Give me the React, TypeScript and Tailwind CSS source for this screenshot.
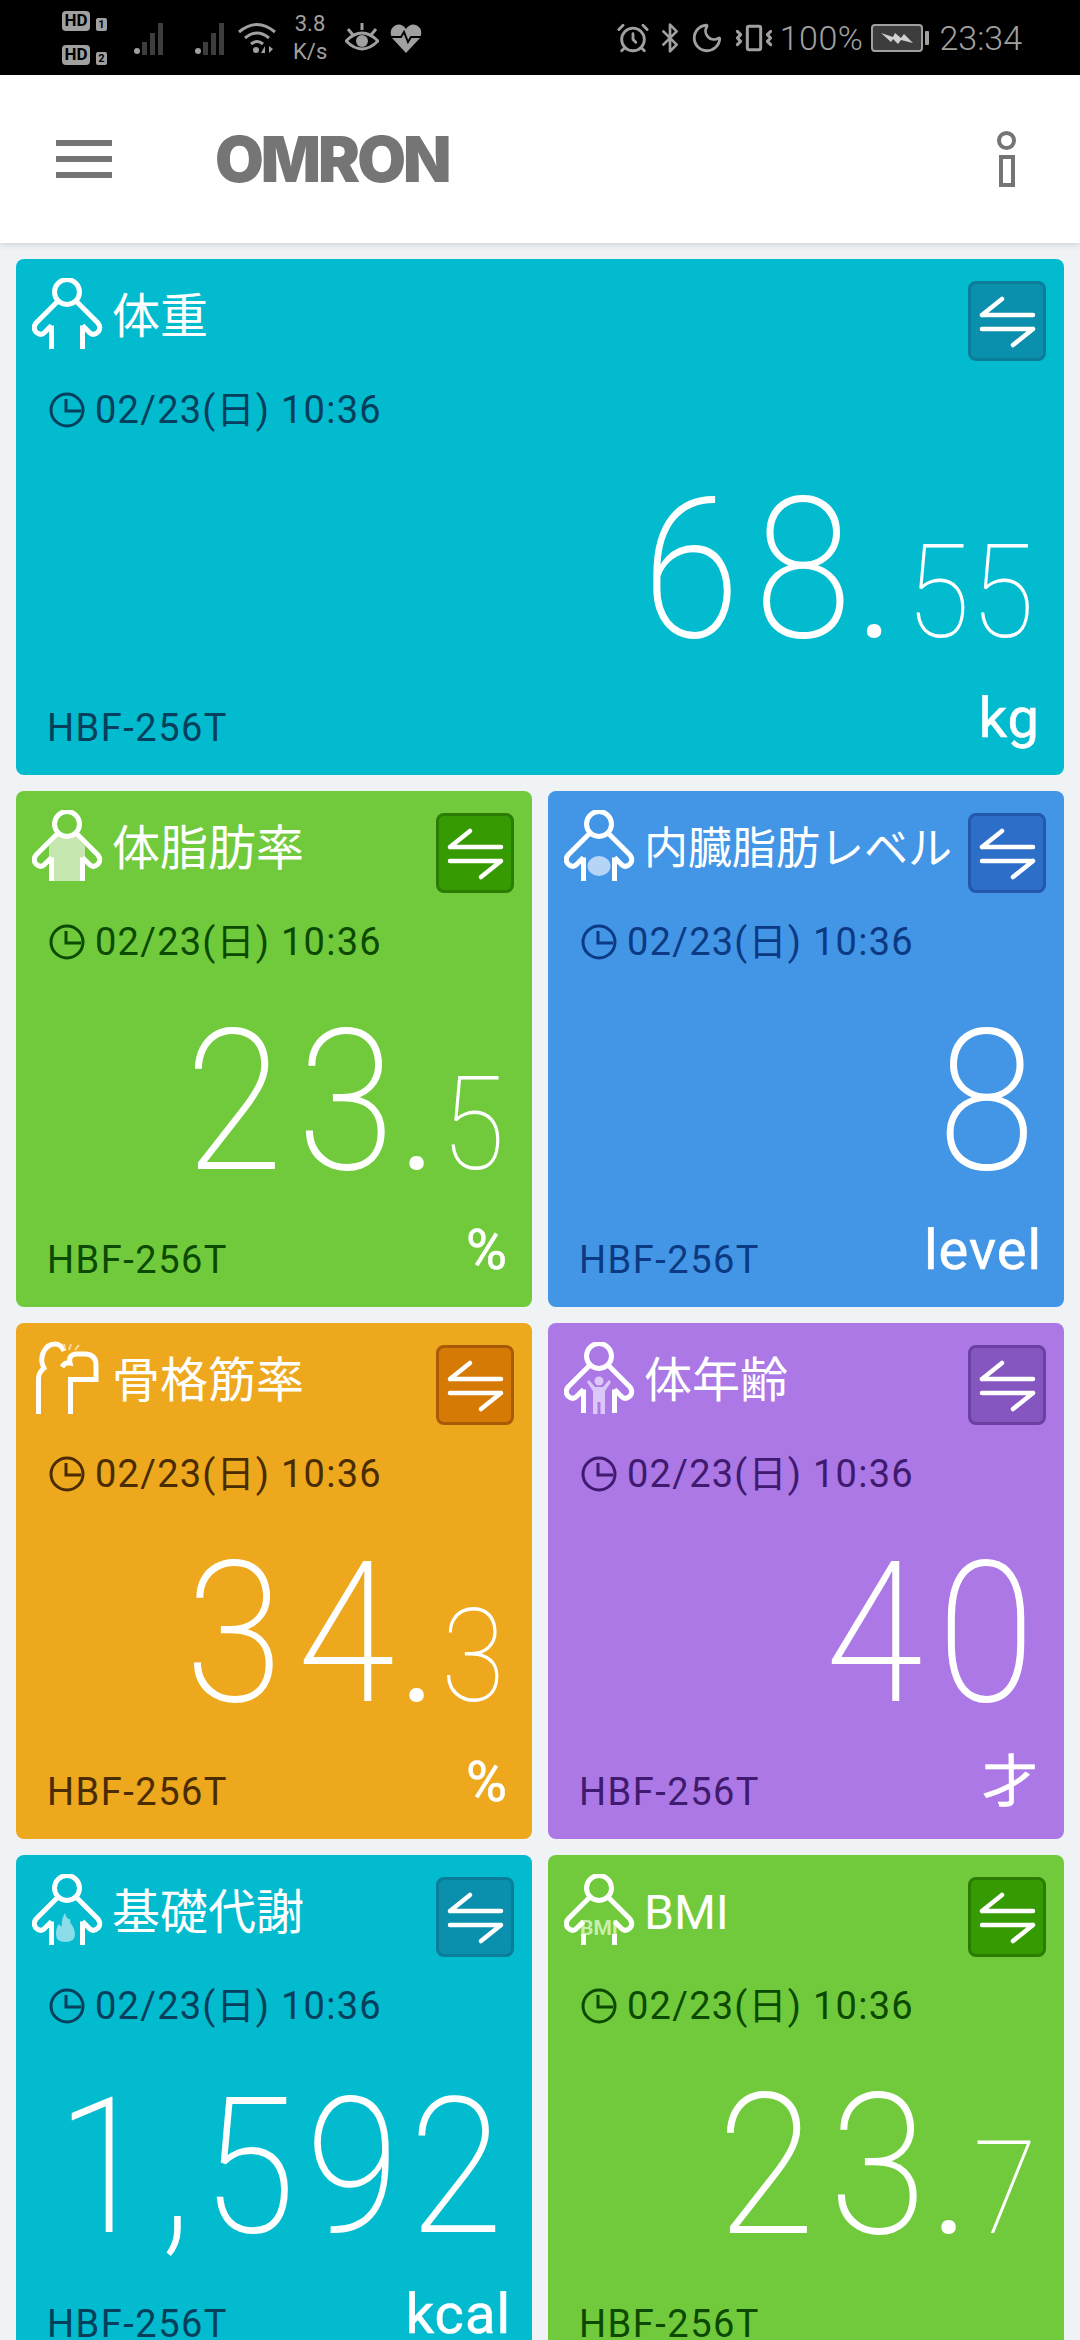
import type { ReactNode } from "react";
import { AlarmClock, Bluetooth, Moon, Vibrate } from "lucide-react";

const cjk = "font-['Roboto','Noto_Sans_CJK_JP',sans-serif]";

function Outline({ kind }: { kind: string }) {
  const legs = kind === "bmi" ? "M19.5 60 V71 M50.5 60 V71" : "M19.5 47.5 V71 M50.5 47.5 V71";
  return (
    <g fill="none" stroke="#fff" strokeWidth="5" strokeLinejoin="round">
      <circle cx="35" cy="14" r="12.5" />
      <path d="M26 23 L4 45 Q0.5 50 4 54 Q8 58 12 55 L19.5 47.5" />
      <path d="M44 23 L66 45 Q69.5 50 66 54 Q62 58 58 55 L50.5 47.5" />
      <path d={legs} />
    </g>
  );
}

function BodyIcon({ kind }: { kind: string }) {
  return (
    <svg width="72" height="72" viewBox="0 0 72 72" className="shrink-0">
      {kind === "fat" && <path d="M27 25 Q35 29 43 25 L53 36 V71 H17 V36 Z" fill="#c6e8b0" />}
      {kind === "visceral" && <ellipse cx="35" cy="56" rx="11.5" ry="10" fill="#b6d5f6" />}
      {kind === "age" && (
        <g fill="#dcc8f8">
          <circle cx="35" cy="39" r="4.5" />
          <path d="M23 40 L25 38 L31 45 H39 L45 38 L47 40 L41 49 V72 H36.5 V60 H33.5 V72 H29 V49 Z" />
        </g>
      )}
      {kind === "burn" && (
        <path d="M33 39 Q35 46 38 45 Q38 49 40 51 Q43 55 43 60 Q43 68 33 68 Q24 68 24 60 Q24 54 27 50 Q29 53 30 52 Q29 45 33 39 Z" fill="#8cdcea" />
      )}
      {kind === "bmi" && (
        <text x="35" y="61" textAnchor="middle" fontSize="21" fontWeight="700" fontFamily="Roboto, sans-serif" fill="#c8efae" textLength="38" lengthAdjust="spacingAndGlyphs">
          BMI
        </text>
      )}
      <Outline kind={kind} />
    </svg>
  );
}

function MuscleIcon() {
  return (
    <svg width="72" height="74" viewBox="0 0 72 74" fill="none" stroke="#fff" strokeWidth="5" className="shrink-0">
      <path d="M6.5 73 V37 Q7 31 12 27 Q8 20 11 12 Q15 3 23 3 Q29 3 32 10" />
      <path d="M30 26 Q33 21 38 22 Q36 14 44 13 H54 Q64 14 64 24 V38.5 H38.5 V73" />
      <path d="M37 9 L39 3 M43 9 L47 4 M33 8 L32 3" stroke="#f8dca0" strokeWidth="2" />
    </svg>
  );
}

function SwapButton({ fill }: { fill: string }) {
  return (
    <div className={`w-[78px] h-[80px] rounded-lg border-[3px] shrink-0 mt-[3px] mr-[18px] ${fill}`}>
      <svg width="72" height="74" viewBox="0 0 72 74" fill="none" stroke="#fff" strokeWidth="4.5" strokeLinecap="round">
        <path d="M11 31 H62 M11 31 L31 15 M11 45 H62 M62 45 L42 61" />
      </svg>
    </div>
  );
}

function ClockIcon() {
  return (
    <svg width="36" height="36" viewBox="0 0 36 36" fill="none" stroke="currentColor" strokeWidth="3" className="shrink-0">
      <circle cx="18" cy="18" r="16" />
      <path d="M17 7 V19 H32" />
    </svg>
  );
}

type Metric = {
  title: string;
  titleSize?: string;
  icon: ReactNode;
  bg: string;
  button: string;
  ink: string;
  whole: string;
  wholeSize?: string;
  valueTop?: string;
  decimal?: string;
  unit: string;
  valuePad: string;
  unitPad: string;
};

const metrics: Metric[] = [
  {
    title: "体重", icon: <BodyIcon kind="plain" />, bg: "bg-[#02bbcf]", button: "bg-[#0a8fad] border-[#0a7d9a]", ink: "text-[#043f5c]",
    whole: "68", decimal: "55", unit: "kg", valuePad: "pr-[29px]", unitPad: "pr-[24px]",
  },
  {
    title: "体脂肪率", icon: <BodyIcon kind="fat" />, bg: "bg-[#70ca3c]", button: "bg-[#369a02] border-[#2a7c02]", ink: "text-[#0c4a02]",
    whole: "23", decimal: "5", unit: "%", valuePad: "pr-[26px]", unitPad: "pr-[24px]",
  },
  {
    title: "内臓脂肪レベル", titleSize: "text-[44px]", icon: <BodyIcon kind="visceral" />, bg: "bg-[#4395e6]", button: "bg-[#2d6ec8] border-[#2358aa]", ink: "text-[#0b3a82]",
    whole: "8", unit: "level", valuePad: "pr-[23px]", unitPad: "pr-[22px]",
  },
  {
    title: "骨格筋率", icon: <MuscleIcon />, bg: "bg-[#eda81d]", button: "bg-[#d67a06] border-[#a85a06]", ink: "text-[#4a2c02]",
    whole: "34", decimal: "3", unit: "%", valuePad: "pr-[26px]", unitPad: "pr-[24px]",
  },
  {
    title: "体年齢", icon: <BodyIcon kind="age" />, bg: "bg-[#ab78e6]", button: "bg-[#8656c0] border-[#6b40a2]", ink: "text-[#3f1a6e]",
    whole: "40", unit: "才", valuePad: "pr-[23px]", unitPad: "pr-[25px]",
  },
  {
    title: "基礎代謝", icon: <BodyIcon kind="burn" />, bg: "bg-[#02bbcf]", button: "bg-[#0a8fad] border-[#0a7d9a]", ink: "text-[#043f5c]",
    whole: "1,592", wholeSize: "text-[189px] tracking-[11px]", valueTop: "mt-[49px]", unit: "kcal", valuePad: "pr-[23px]", unitPad: "pr-[21px]",
  },
  {
    title: "BMI", icon: <BodyIcon kind="bmi" />, bg: "bg-[#70ca3c]", button: "bg-[#369a02] border-[#2a7c02]", ink: "text-[#0c4a02]",
    whole: "23", decimal: "7", unit: "", valuePad: "pr-[26px]", unitPad: "pr-[24px]",
  },
];

function MetricCard({ item, wide = false }: { item: Metric; wide?: boolean }) {
  return (
    <article className={`flex h-[516px] flex-col overflow-hidden rounded-lg pt-[19px] ${item.bg} ${wide ? "col-span-2" : ""}`}>
      <div className="flex items-start justify-between pl-4">
        <div className="flex h-[72px] items-center gap-[8px]">
          {item.icon}
          <h2 className={`${cjk} whitespace-nowrap pt-[5px] font-normal text-white ${item.titleSize ?? "text-[48px]"}`}>{item.title}</h2>
        </div>
        <SwapButton fill={item.button} />
      </div>

      <div className={`mt-[31px] flex h-[36px] items-center gap-[10px] pl-[33px] ${item.ink}`}>
        <ClockIcon />
        <span className={`${cjk} whitespace-nowrap text-[38px] leading-none tracking-[1.25px]`}>02/23(日) 10:36</span>
      </div>

      <div className={`${item.valueTop ?? "mt-[43px]"} flex h-[197px] items-baseline justify-end text-white ${item.valuePad} font-['Roboto',sans-serif] font-thin leading-none`}>
        <span className={`mr-[6px] inline-block origin-right scale-x-90 font-extralight ${item.wholeSize ?? "text-[197px] tracking-[16px]"}`}>
          {item.whole.slice(0, -1)}
          <span className="tracking-normal">{item.whole.slice(-1)}</span>
        </span>
        {item.decimal && (
          <>
            <span className="text-[129px] font-normal">.</span>
            <span className="inline-block origin-right scale-x-90 text-[129px] tracking-[1px]">{item.decimal}</span>
          </>
        )}
      </div>

      <div className="mt-auto flex items-end justify-between pb-[25px] pl-[31px]">
        <span className={`font-['Roboto',sans-serif] text-[38px] leading-[44px] tracking-[1.5px] ${item.ink}`}>HBF-256T</span>
        <span className={`${cjk} text-[56px] font-normal leading-[64px] tracking-[1px] text-white [-webkit-text-stroke:0.6px_white] ${item.unitPad}`}>{item.unit}</span>
      </div>
    </article>
  );
}

function HdBadge({ n }: { n: string }) {
  return (
    <div className="flex items-end gap-[6px]">
      <span className="flex h-[20px] w-[28px] items-center justify-center rounded-[4px] bg-[#a0a0a0] font-['Roboto',sans-serif] text-[17px] font-bold leading-none text-black">
        HD
      </span>
      <span className="flex h-[13px] w-[11px] items-center justify-center rounded-[2px] bg-[#a0a0a0] font-['Roboto',sans-serif] text-[11px] font-bold leading-none text-black">
        {n}
      </span>
    </div>
  );
}

function SignalBars() {
  return (
    <svg width="34" height="34" viewBox="0 0 34 34" fill="#3d3d3d" className="shrink-0">
      <circle cx="3" cy="30" r="3" fill="#a0a0a0" />
      <rect x="8" y="21" width="5" height="13" />
      <rect x="16" y="12" width="5" height="22" />
      <rect x="24" y="2" width="5" height="32" />
    </svg>
  );
}

function StatusBar() {
  return (
    <div className="flex h-[75px] items-center justify-between bg-black pl-[62px] pr-[58px] text-[#a0a0a0]">
      <div className="flex items-center">
        <div className="flex flex-col gap-[14px]">
          <HdBadge n="1" />
          <HdBadge n="2" />
        </div>
        <div className="ml-[27px] flex gap-[27px]">
          <SignalBars />
          <SignalBars />
        </div>
        <svg width="38" height="32" viewBox="0 0 38 32" fill="none" stroke="currentColor" strokeWidth="3" className="ml-[9px] shrink-0">
          <path d="M1 10 Q19 -5 37 10 M7 16 Q19 6 31 16 M13 22 Q19 17 25 22" />
          <circle cx="18" cy="28" r="3" fill="currentColor" stroke="none" />
          <path d="M27 24 L27 31 L23 31 Z M31 24 L31 31 L35 27 Z" fill="currentColor" stroke="none" />
        </svg>
        <div className="ml-[17px] w-[34px] text-center font-['Roboto',sans-serif] text-[22px] leading-[28px]">
          <div>3.8</div>
          <div>K/s</div>
        </div>
        <svg width="34" height="30" viewBox="0 0 34 30" fill="none" stroke="currentColor" strokeWidth="3" className="ml-[18px] shrink-0">
          <path d="M1 18 Q17 2 33 18 Q17 34 1 18 Z" />
          <circle cx="17" cy="18" r="6" fill="currentColor" stroke="none" />
          <path d="M3 6 L8 12 M17 0 V7 M31 6 L26 12" />
        </svg>
        <svg width="32" height="30" viewBox="0 0 32 30" className="ml-[11px] shrink-0">
          <path d="M16 30 L2 15 Q-2 6 6 2 Q12 0 16 6 Q20 0 26 2 Q34 6 30 15 Z" fill="currentColor" />
          <path d="M1 14 H11 L14 9 L18 19 L21 14 H31" fill="none" stroke="#000" strokeWidth="2" />
        </svg>
      </div>
      <div className="flex items-center">
        <AlarmClock size={34} strokeWidth={2} className="shrink-0" />
        <Bluetooth size={32} strokeWidth={2} className="ml-[4px] shrink-0" />
        <Moon size={34} strokeWidth={2} className="ml-[4px] shrink-0" />
        <Vibrate size={40} strokeWidth={1.8} className="ml-[10px] shrink-0" />
        <span className="ml-[6px] font-['Roboto',sans-serif] text-[34px] font-light leading-none tracking-[0.5px]">100%</span>
        <div className="ml-[8px] flex items-center gap-[2px]">
          <div className="flex h-[28px] w-[52px] items-center justify-center rounded-[4px] border-2 border-[#a0a0a0] bg-[#3d3d3d]">
            <svg width="32" height="14" viewBox="0 0 32 14" fill="#d0d0d0">
              <path d="M0 2 L12 6 L14 2 L20 7 L23 3 L32 12 L20 9 L17 13 L12 8 L10 11 Z" />
            </svg>
          </div>
          <div className="h-[14px] w-[4px] rounded-[1px] bg-[#a0a0a0]" />
        </div>
        <span className="ml-[10px] font-['Roboto',sans-serif] text-[34px] font-light leading-none">23:34</span>
      </div>
    </div>
  );
}

function AppHeader() {
  return (
    <header className="relative flex h-[168px] items-center bg-white pl-[56px] pr-[64px] shadow-[0_2px_6px_rgba(0,0,0,0.12)]">
      <div className="flex w-[56px] flex-col gap-[10px]">
        <div className="h-[6px] bg-[#757575]" />
        <div className="h-[6px] bg-[#757575]" />
        <div className="h-[6px] bg-[#757575]" />
      </div>
      <div className="ml-[103px] font-['Inter',sans-serif] text-[63px] font-black leading-none tracking-[-3px] text-[#757575]">OMRON</div>
      <div className="ml-auto flex flex-col items-center gap-[5px]">
        <div className="h-[19px] w-[19px] rounded-full border-[4px] border-[#757575]" />
        <div className="h-[32px] w-[16px] border-[4px] border-[#757575]" />
      </div>
    </header>
  );
}

export default function App() {
  return (
    <div className="h-[2340px] w-[1080px] overflow-hidden bg-[#eff3f6]">
      <StatusBar />
      <AppHeader />
      <main className="grid grid-cols-2 gap-4 px-4 pt-4">
        {metrics.map((item, i) => (
          <MetricCard key={item.title} item={item} wide={i === 0} />
        ))}
      </main>
    </div>
  );
}
